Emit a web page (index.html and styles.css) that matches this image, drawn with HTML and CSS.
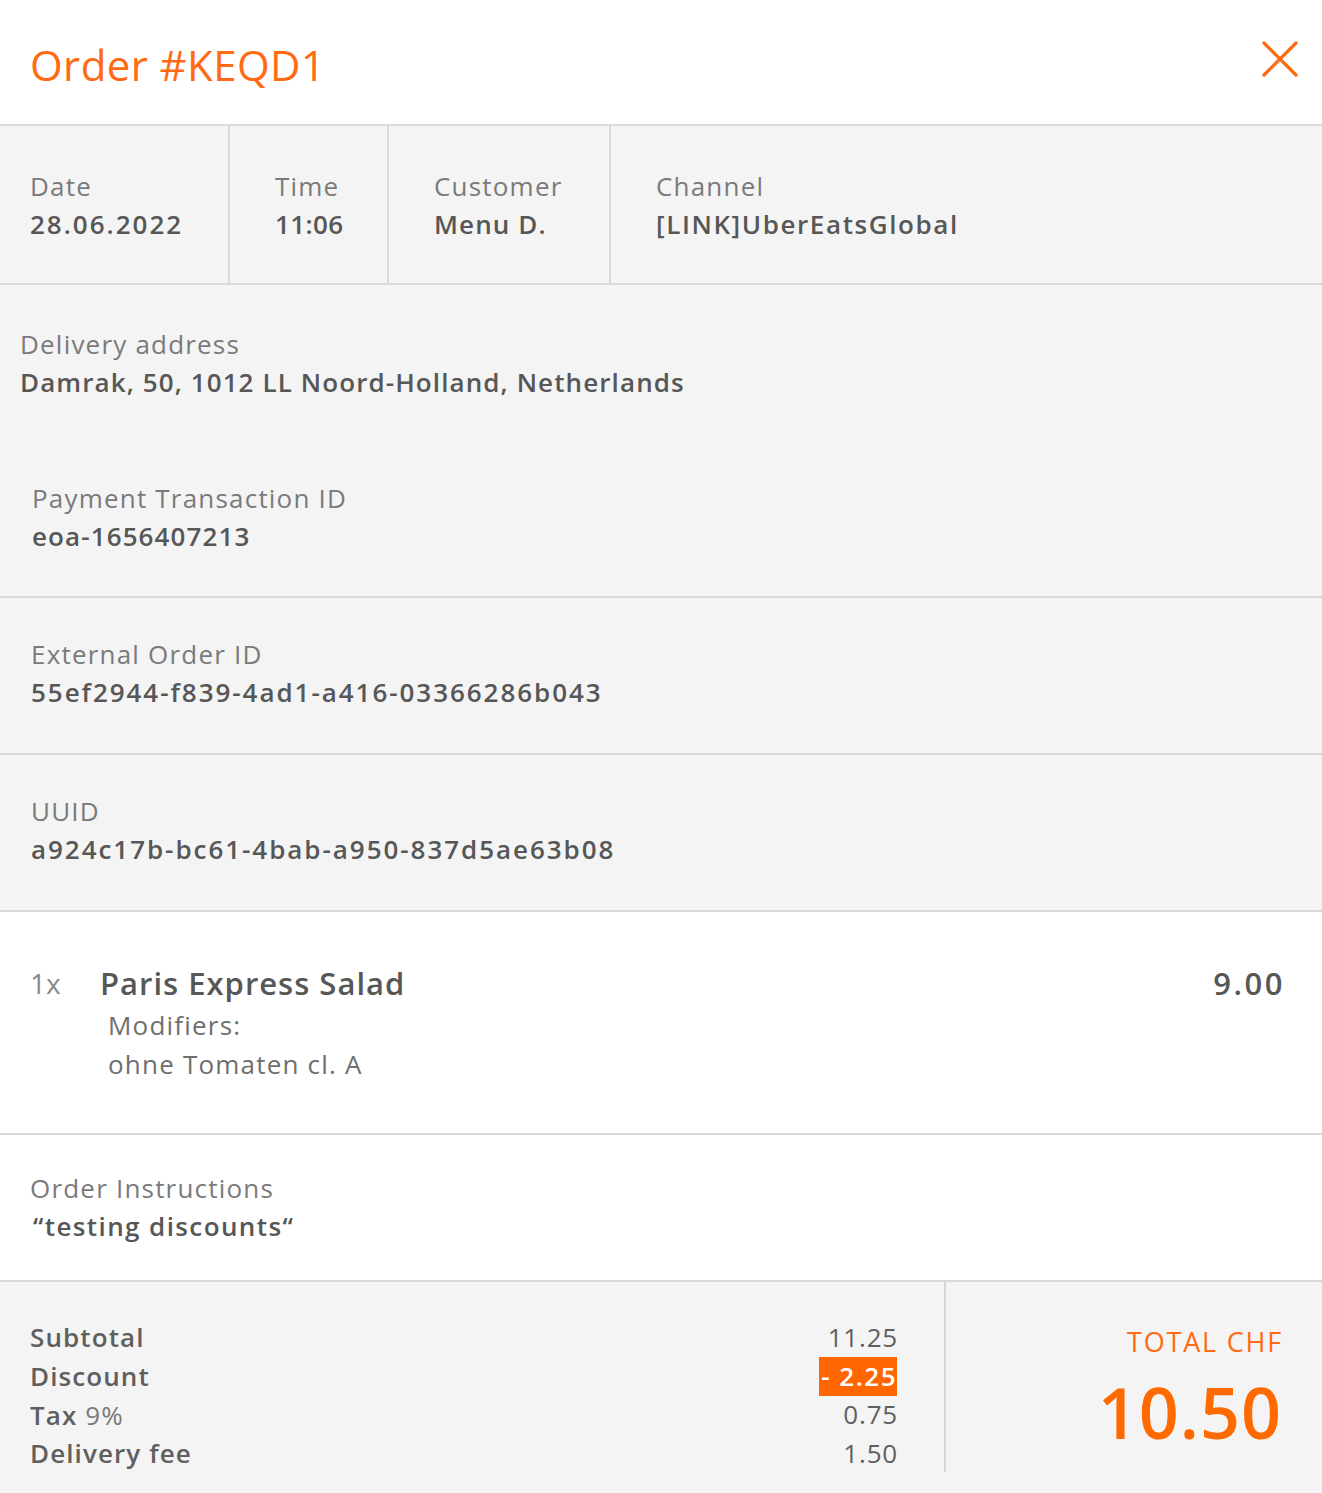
FILE: index.html
```html
<!DOCTYPE html>
<html lang="en">
<head>
<meta charset="utf-8">
<title>Order #KEQD1</title>
<link rel="stylesheet" href="styles.css">
</head>
<body>
<div class="modal">
  <header class="head">
    <h1 class="title">Order #KEQD1</h1>
    <button class="close" aria-label="Close">
      <svg width="36" height="36" viewBox="0 0 36 36"><path d="M2 2 L34 34 M34 2 L2 34" stroke="#ff6a13" stroke-width="3.2" stroke-linecap="round" fill="none"/></svg>
    </button>
  </header>

  <section class="info">
    <div class="cell c1"><div class="lbl">Date</div><div class="val">28.06.2022</div></div>
    <div class="cell c2"><div class="lbl">Time</div><div class="val">11:06</div></div>
    <div class="cell c3"><div class="lbl">Customer</div><div class="val">Menu D.</div></div>
    <div class="cell c4"><div class="lbl">Channel</div><div class="val">[LINK]UberEatsGlobal</div></div>
  </section>

  <section class="grey addr">
    <div class="block addr-block"><div class="lbl">Delivery address</div><div class="val">Damrak, 50, 1012 LL Noord-Holland, Netherlands</div></div>
    <div class="block pay-block"><div class="lbl">Payment Transaction ID</div><div class="val">eoa-1656407213</div></div>
  </section>

  <section class="grey idsec">
    <div class="lbl">External Order ID</div><div class="val">55ef2944-f839-4ad1-a416-03366286b043</div>
  </section>

  <section class="grey idsec">
    <div class="lbl">UUID</div><div class="val">a924c17b-bc61-4bab-a950-837d5ae63b08</div>
  </section>

  <section class="item">
    <div class="qty">1x</div>
    <div class="item-main">
      <div class="item-name">Paris Express Salad</div>
      <div class="mods">Modifiers:</div>
      <div class="mods">ohne Tomaten cl. A</div>
    </div>
    <div class="price">9.00</div>
  </section>

  <section class="instr">
    <div class="lbl">Order Instructions</div>
    <div class="val quote">“testing discounts“</div>
  </section>

  <section class="totals">
    <div class="sums">
      <div class="row"><span class="k">Subtotal</span><span class="v">11.25</span></div>
      <div class="row"><span class="k">Discount</span><span class="v disc">- 2.25</span></div>
      <div class="row"><span class="k">Tax <span class="light">9%</span></span><span class="v">0.75</span></div>
      <div class="row"><span class="k">Delivery fee</span><span class="v">1.50</span></div>
    </div>
    <div class="grand">
      <div class="grand-lbl">TOTAL CHF</div>
      <div class="grand-val">10.50</div>
    </div>
  </section>
</div>
</body>
</html>
```
FILE: styles.css
```css
* { box-sizing: border-box; }
html, body { margin: 0; padding: 0; background: #ffffff; }
body {
  font-family: "Open Sans", "Liberation Sans", sans-serif;
  color: #5b5b5b;
  width: 1322px;
  height: 1493px;
  overflow: hidden;
}
.modal { width: 1322px; }

.head {
  height: 126px;
  display: flex;
  align-items: center;
  justify-content: space-between;
  padding: 0 24px 0 30px;
  border-bottom: 2px solid #dcdcdc;
  background: #fff;
}
.title {
  margin: 0;
  font-size: 42px;
  font-weight: 400;
  color: #ff6a13;
  letter-spacing: 0.4px;
  padding-top: 4px;
}
.close {
  border: 0;
  background: none;
  padding: 0;
  width: 36px;
  height: 36px;
  margin-top: -6px;
  cursor: pointer;
}
.close svg { display: block; }

.lbl {
  font-size: 26px;
  line-height: 38px;
  color: #7a7a7a;
  font-weight: 400;
  letter-spacing: 1.2px;
  white-space: nowrap;
}
.val {
  font-size: 26px;
  line-height: 38px;
  color: #575757;
  font-weight: 600;
  letter-spacing: 1.1px;
  white-space: nowrap;
}

.info {
  display: flex;
  height: 159px;
  background: #f4f4f4;
  border-bottom: 2px solid #d9d9d9;
}
.cell {
  display: flex;
  flex-direction: column;
  justify-content: center;
  padding-left: 45px;
  border-right: 2px solid #d9d9d9;
  flex: none;
}
.c1 { width: 230px; padding-left: 30px; }
.c1 .val { letter-spacing: 2px; }
.c2 { width: 159px; }
.c2 .val { letter-spacing: 0.4px; }
.c3 { width: 222px; }
.c4 { border-right: 0; flex: 1; }
.c4 .val { letter-spacing: 1.6px; }

.grey { background: #f4f4f4; border-bottom: 2px solid #d9d9d9; }
.addr { padding: 40px 0 41px; }
.addr-block { padding-left: 20px; }
.pay-block { padding-left: 32px; margin-top: 78px; }
.idsec { padding: 37px 0 42px 31px; }
.idsec .val { letter-spacing: 1.95px; }

.item {
  display: flex;
  align-items: flex-start;
  padding: 50px 39px 49px 30px;
  border-bottom: 2px solid #d9d9d9;
  background: #fff;
}
.qty {
  width: 70px;
  font-size: 28px;
  line-height: 42px;
  color: #8a8a8a;
  font-weight: 400;
}
.item-main { flex: 1; }
.item-name {
  font-size: 31px;
  line-height: 42px;
  font-weight: 600;
  color: #575757;
  margin-bottom: 2px;
  letter-spacing: 1px;
}
.mods {
  font-size: 26px;
  line-height: 39px;
  color: #6e6e6e;
  padding-left: 8px;
  letter-spacing: 1.2px;
}
.price {
  font-size: 31px;
  line-height: 42px;
  font-weight: 600;
  color: #575757;
  letter-spacing: 2.5px;
  margin-right: -2px;
}

.instr {
  padding: 34px 0 35px 30px;
  border-bottom: 2px solid #d9d9d9;
  background: #fff;
}
.quote { padding-left: 3px; letter-spacing: 1.4px; }

.totals {
  display: flex;
  background: #f4f4f4;
  height: 211px;
}
.sums {
  width: 946px;
  padding: 36px 47px 0 30px;
  border-right: 2px solid #d6d6d6;
  height: 190px;
}
.row {
  display: flex;
  justify-content: space-between;
  align-items: center;
  height: 38.7px;
  font-size: 26px;
}
.k { font-weight: 600; color: #5f5f5f; letter-spacing: 1.1px; }
.k .light { font-weight: 400; color: #7a7a7a; }
.v { font-weight: 500; color: #5f5f5f; line-height: 39px; letter-spacing: 0.8px; margin-right: -1px; }
.v.disc {
  background: #ff6600;
  color: #fff;
  font-weight: 600;
  padding: 0 0 0 2px;
  margin-right: 0;
  letter-spacing: 1.5px;
}
.grand {
  flex: 1;
  text-align: right;
  padding: 42px 41px 0 0;
}
.grand-lbl {
  font-size: 27px;
  line-height: 36px;
  color: #ff6a13;
  font-weight: 500;
  letter-spacing: 1.8px;
  margin-right: -2px;
}
.grand-val {
  font-size: 70px;
  line-height: 80px;
  color: #ff6a00;
  font-weight: 600;
  margin-top: 12px;
  margin-right: -1px;
  letter-spacing: 1px;
}
```
